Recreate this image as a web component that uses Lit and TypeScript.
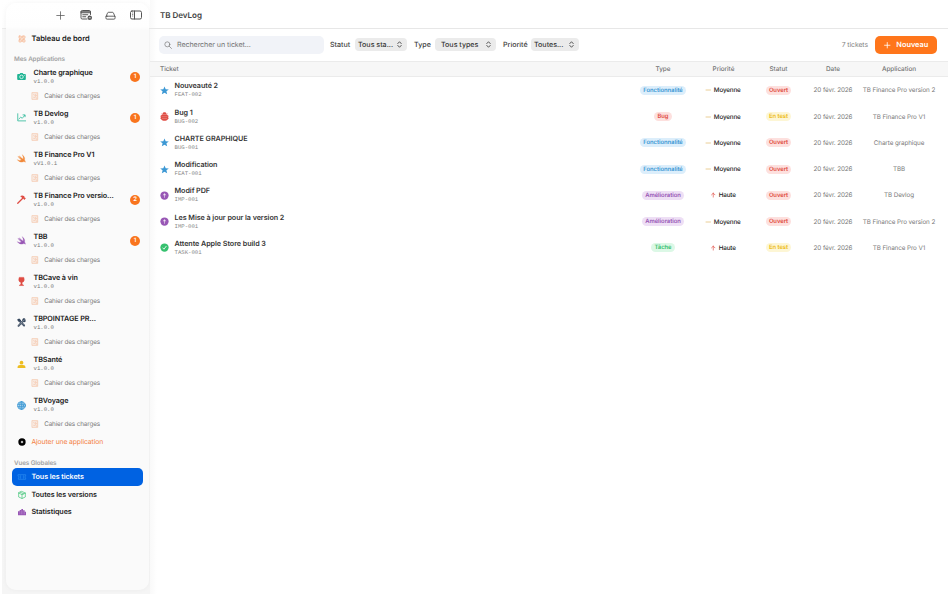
import { LitElement, html, css, svg } from "lit";
import { customElement, property } from "lit/decorators.js";
import { classMap } from "lit/directives/class-map.js";

const icons: Record<string, unknown> = {
  plus: svg`<path d="M12 2v20M2 12h20" class="s"/>`,
  calendar: svg`<path d="M14 20H4.500a2.500 2.500 0 0 1-2.500-2.500v-12A2.500 2.500 0 0 1 4.500 3h14A2.500 2.500 0 0 1 21 5.500V11M2 7.500h19M2 5.500h19M5.500 11.500h10M5.500 15.500h6" class="s"/><circle cx="19.500" cy="17.500" r="4.500"/><path d="M17.500 17.500h4" stroke="#fff" stroke-width="1.500"/>`,
  drive: svg`<path d="M2 14.500 5.500 6.800A2.500 2.500 0 0 1 7.800 5h8.400a2.500 2.500 0 0 1 2.300 1.800L22 14.500" class="s"/><rect x="2" y="13.500" width="20" height="6.500" rx="2.500" class="s"/>`,
  panel: svg`<rect x="1" y="4" width="22" height="16" rx="3" class="s"/><path d="M9 4v16" class="s"/><path d="M4 8h2.500M4 11h2.500M4 14h2.500" stroke="currentColor" stroke-width="1.300"/>`,
  grid: svg`<path d="M3 3h18v18H3z" fill-opacity=".25"/><g class="s"><rect x="3" y="3" width="7" height="7" rx="1"/><rect x="14" y="3" width="7" height="7" rx="1"/><rect x="3" y="14" width="7" height="7" rx="1"/><rect x="14" y="14" width="7" height="7" rx="1"/></g>`,
  camera: svg`<path d="M3 5h4l2-2.500h6L17 5h4a2.500 2.500 0 0 1 2.500 2.500v11A2.500 2.500 0 0 1 21 21H3a2.500 2.500 0 0 1-2.500-2.500v-11A2.500 2.500 0 0 1 3 5z"/><circle cx="12" cy="13" r="4.700" fill="none" stroke="#fff" stroke-width="2"/><circle cx="20" cy="8.500" r="1.200" fill="#fff"/>`,
  chart: svg`<path d="M2 2v19h21M5 16l5-5 4 3 7-8M16 5h5.500v5" class="s"/>`,
  swift: svg`<path d="M14 2c5 4 7.500 9 6 14 2 2.500 2.500 4.500 2 6-1.500-2-3.500-2.300-5.500-1.300C11 23 4.500 20.500 1 15c4 2.500 8 3 11 1.300C8 13 5 9.500 2.500 6c3 2.500 6 5 9 7C9.500 10.500 7.500 8 6 5c3.500 3.500 7 6.500 10.500 8.800C17.500 10 16.500 6 14 2z" stroke="currentColor"/>`,
  hammer: svg`<path d="M2 22 16 8" fill="none" stroke="currentColor" stroke-width="3.400" stroke-linecap="round"/><path d="M8 3.500c4-3 8.500-2.500 11 0l1.500 1.500-.2 2 1 .8 1-.3 1.200 1.200-4 4.300-1.400-1.200v-1.200L17 9.500l-2 .2-2-2C12.500 6 11 4.500 8 3.500z"/>`,
  wine: svg`<path d="M6 1h12c1.200 4 1.500 7 .5 9.500-.8 2-2.500 3.200-5 3.600V20c2 .3 4 1 4 2.800h-11C6.500 21 8.500 20.300 10.500 20v-5.900c-2.500-.4-4.200-1.600-5-3.600C4.500 8 4.800 5 6 1z" stroke="currentColor" stroke-width="1.500"/>`,
  tools: svg`<path d="M4 21 20 4M6 7l13 13" fill="none" stroke="currentColor" stroke-width="5" stroke-linecap="round"/><path d="M1 3l5-2 5 5-1 4-4 1-5-5zM14 4c2-4 6-4 7-2l-3 3 1 2 5-1c0 4-4 6-6 5z"/><path d="M4 21 20 4M8 9l11 11" stroke="#fff" stroke-opacity=".8" stroke-width="1.100"/>`,
  person: svg`<circle cx="12" cy="7" r="5"/><path d="M1.500 21v-2.500C2 14 7 13.500 12 13.500s10 .5 10.500 5V21z"/>`,
  globe: svg`<circle cx="12" cy="12" r="11" fill-opacity=".4"/><g class="s"><circle cx="12" cy="12" r="10.500"/><ellipse cx="12" cy="12" rx="5" ry="10.500"/><path d="M2 9h20M2 15h20M12 1.500v21"/></g>`,
  doc: svg`<path d="M4 2h16v20H4z" fill-opacity=".2"/><path d="M4 2h16v20H4zM8 8l2 2 4-4M8 16h3M14 13l2 6M13 10h4" class="s"/>`,
  addcircle: svg`<circle cx="12" cy="12" r="11"/><path d="M12 8.500v7M8.500 12h7" stroke="#fff" stroke-width="2.800"/>`,
  ticket: svg`<path d="M1 5h22v4.500a2.500 2.500 0 0 0 0 5V19H1v-4.500a2.500 2.500 0 0 0 0-5z" fill-opacity=".1"/><path d="M1 5h22v4.500a2.500 2.500 0 0 0 0 5V19H1v-4.500a2.500 2.500 0 0 0 0-5zM7 8v8M17 8v8" class="s"/>`,
  box: svg`<path d="M12 1.500 22 6v12l-10 4.500L2 18V6zM2 6l10 5 10-5M12 11v11M7 3.700l10 5" class="s"/>`,
  bars: svg`<path d="M0 10h5V6h5V3h5v4h5v4h4v11H0z"/><path d="M5.500 10v9M10.500 7v12M15 8v11M19.500 11v8" stroke="#fff" stroke-opacity=".5" stroke-width="1"/>`,
  star: svg`<path d="m12 1 3.100 7.500 8.400.6-6.400 5.200 2 8L12 18l-7.100 4.300 2-8L.5 9.100l8.400-.6z"/>`,
  bug: svg`<path d="M6.500 6c0-7 11-7 11 0v1h-11z"/><path d="M4 8h16c2.500 4 2.500 8 1 11-2 3.500-5.500 4.500-9 4.500S5 22.500 3 19C1.500 16 1.500 12 4 8z"/><path d="M1 11h22M1 17h22M4 5l3 2M20 5l-3 2" stroke="currentColor" stroke-width="2"/><path d="M4 12.500h16M5 17.500h14" stroke="#fff" stroke-opacity=".4" stroke-width="1.600"/>`,
  up: svg`<circle cx="12" cy="12" r="11"/><path d="M12 18V8" stroke="#fff" stroke-opacity=".6" stroke-width="2.400"/><path d="m7 11.500 5-6 5 6z" fill="#fff" fill-opacity=".65"/>`,
  check: svg`<circle cx="12" cy="12" r="11"/><path d="m7 12.500 3.500 4L17 8" fill="none" stroke="#fff" stroke-width="2.200"/>`,
  search: svg`<circle cx="10" cy="10" r="7.500" class="s"/><path d="m15.500 15.500 7 7" class="s"/>`,
  updown: svg`<path d="m6 9 6-6.500L18 9M6 15l6 6.500 6-6.500" class="s"/>`,
  dash: svg`<path d="M0 12h24" class="s"/>`,
  arrow: svg`<path d="M12 23V2M3 11l9-9 9 9" class="s"/>`,
};

@customElement("ui-icon")
class UiIcon extends LitElement {
  @property() name = "plus";
  static styles = css`
    :host { display: inline-flex; flex: none; width: 9px; height: 9px; }
    svg { width: 100%; height: 100%; fill: currentColor; overflow: visible; }
    .s { fill: none; stroke: currentColor; stroke-width: var(--w, 2); stroke-linecap: round; stroke-linejoin: round; }
  `;
  render() {
    return html`<svg viewBox="0 0 24 24" aria-hidden="true">${icons[this.name]}</svg>`;
  }
}

const apps = [
  { name: "Charte graphique", version: "v1.0.0", icon: "camera", tone: "teal", count: 1 },
  { name: "TB Devlog", version: "v1.0.0", icon: "chart", tone: "teal", count: 1 },
  { name: "TB Finance Pro V1", version: "vV1.0.1", icon: "swift", tone: "orange", count: 0 },
  { name: "TB Finance Pro versio...", version: "v1.0.0", icon: "hammer", tone: "red", count: 2 },
  { name: "TBB", version: "v1.0.0", icon: "swift", tone: "purple", count: 1 },
  { name: "TBCave à vin", version: "v1.0.0", icon: "wine", tone: "red", count: 0 },
  { name: "TBPOINTAGE PR...", version: "v1.0.0", icon: "tools", tone: "navy", count: 0 },
  { name: "TBSanté", version: "v1.0.0", icon: "person", tone: "yellow", count: 0 },
  { name: "TBVoyage", version: "v1.0.0", icon: "globe", tone: "blue", count: 0 },
];

const kinds: Record<string, { label: string; icon: string; tone: string }> = {
  feature: { label: "Fonctionnalité", icon: "star", tone: "blue" },
  bug: { label: "Bug", icon: "bug", tone: "red" },
  improvement: { label: "Amélioration", icon: "up", tone: "purple" },
  task: { label: "Tâche", icon: "check", tone: "green" },
};

const tickets = [
  { title: "Nouveauté 2", id: "FEAT-002", kind: "feature", high: false, open: true, app: "TB Finance Pro version 2" },
  { title: "Bug 1", id: "BUG-002", kind: "bug", high: false, open: false, app: "TB Finance Pro V1" },
  { title: "CHARTE GRAPHIQUE", id: "BUG-001", kind: "feature", high: false, open: true, app: "Charte graphique" },
  { title: "Modification", id: "FEAT-001", kind: "feature", high: false, open: true, app: "TBB" },
  { title: "Modif PDF", id: "IMP-001", kind: "improvement", high: true, open: true, app: "TB Devlog" },
  { title: "Les Mise à jour pour la version 2", id: "IMP-001", kind: "improvement", high: false, open: true, app: "TB Finance Pro version 2" },
  { title: "Attente Apple Store build 3", id: "TASK-001", kind: "task", high: true, open: false, app: "TB Finance Pro V1" },
];

@customElement("app-root")
class AppRoot extends LitElement {
  static styles = css`
    :host { display: grid; grid-template-columns: 150px 798px; height: 594px; overflow: hidden; background: #fff; font-family: Inter, "Liberation Sans", sans-serif; font-size: 7px; line-height: 10px; color: #252525; white-space: nowrap; text-rendering: geometricPrecision; }
    * { box-sizing: border-box; }
    .side { display: flex; padding: 3px 1px 4px 6px; background: linear-gradient(90deg, #fff 2px, transparent 2px), linear-gradient(#fff 0, #fdfdfd 28px, #ececec 28px, #ececec 29px, #f8f8f8 29px, #f5f5f5); }
    .card { width: 143px; border-radius: 10px; background: linear-gradient(#fff 0, #fefefe 24px, #fafafa 27px); box-shadow: 0 0 5px #0000000b; overflow: hidden; }
    .tools { height: 24px; display: flex; align-items: center; color: #555; padding-left: 50px; }
    .tools ui-icon { width: 11px; height: 11px; --w: 2; }
    .tools ui-icon:nth-child(1) { width: 9px; height: 9px; }
    .tools ui-icon:nth-child(2) { margin-left: 15px; width: 12px; height: 12px; }
    .tools ui-icon:nth-child(3) { margin-left: 12.500px; }
    .tools ui-icon:nth-child(4) { margin-left: 14px; width: 12px; height: 12px; }
    .nav { height: 17.600px; margin: 0 6px; padding-left: 6px; display: flex; align-items: center; gap: 5.500px; border-radius: 5px; font-size: 7.150px; letter-spacing: -.07px; font-weight: 600; color: #1c1c1c; }
    .nav ui-icon { width: 8px; height: 8px; }
    .nav.home { margin-top: 2px; height: 18px; padding-top: 1px; font-size: 7.500px; letter-spacing: -.02px; }
    .nav.home ui-icon { color: #f8b48c; }
    .nav.on { background: #0062e2; color: #fff; }
    .nav.on ui-icon { color: #2b8df0; }
    .add { height: 17px; margin-top: .5px; padding-left: 12px; display: flex; align-items: center; gap: 5.500px; color: #f48042; font-size: 6.800px; letter-spacing: -.11px; }
    .add ui-icon { width: 8px; height: 8px; color: #000; }
    .section { padding-left: 8px; color: #a2a2a2; font-size: 6.300px; letter-spacing: -.11px; font-weight: 600; }
    .section.mine { margin-top: 6.500px; }
    .section.views { margin-top: 7.700px; }
    .app { height: 41.080px; padding: 4px 9px 0 11px; display: grid; grid-template-columns: 10px 1fr 10px; column-gap: 6.500px; grid-template-rows: 18px 1fr; align-items: center; }
    .app > ui-icon { width: 9px; height: 9px; justify-self: start; }
    .name { font-size: 7.200px; line-height: 9px; letter-spacing: -.09px; font-weight: 600; color: #202020; }
    .mono { font: 5.650px/9px "Liberation Mono", monospace; color: #777; }
    .count { width: 10px; height: 10px; border-radius: 50%; background: #f9741d; color: #fff; font-size: 6px; font-weight: 600; text-align: center; }
    .spec { grid-column: 1 / -1; align-self: start; display: flex; align-items: center; gap: 5.200px; padding: 5px 0 0 14px; color: #7c7c7c; font-size: 6.350px; letter-spacing: -.14px; }
    .spec ui-icon { width: 8px; height: 8px; color: #f5bfa0; }
    .main { display: flex; flex-direction: column; background: linear-gradient(90deg, #f9f9f9, #fff 7px); }
    .title { height: 29px; border-bottom: 1px solid #e7e7e7; padding: 2px 0 0 10px; display: flex; align-items: center; font-size: 8.050px; letter-spacing: -.04px; font-weight: 600; color: #444; }
    .bar { height: 31.500px; display: flex; align-items: center; padding: 0 11px 0 9px; font-size: 7.100px; color: #3c3c3c; font-weight: 500; }
    .search { width: 165px; height: 18px; border-radius: 5px; background: #f1f3f8; display: flex; align-items: center; gap: 5px; padding-left: 5px; color: #747474; font-weight: 400; margin-right: 6px; letter-spacing: -.07px; }
    .search ui-icon { width: 8px; height: 8px; }
    .sel { height: 13px; border-radius: 4px; background: #ebebeb; display: flex; align-items: center; justify-content: space-between; padding: 0 4px 0 3px; color: #333; }
    .sel ui-icon { width: 7px; height: 7px; --w: 2.700; }
    .l1 { width: 25px; } .l2 { width: 21px; } .l3 { width: 28px; }
    .w1 { width: 52px; margin-right: 7px; } .w2 { width: 61px; padding-left: 6px; margin-right: 7px; } .w3 { width: 48px; }
    .total { margin-left: auto; font-size: 6.800px; letter-spacing: -.06px; color: #7e7e7e; font-weight: 400; }
    .new { width: 62px; height: 18px; margin-left: 7px; border-radius: 5px; background: #ff761b; color: #fff; display: flex; align-items: center; justify-content: center; gap: 6px; font-size: 7.400px; letter-spacing: -.03px; font-weight: 600; }
    .new ui-icon { width: 6.500px; height: 6.500px; --w: 3; }
    .row { display: grid; grid-template-columns: 1fr 60px 61px 49px 60px 72px; padding: 0 13px 0 10px; height: 26.250px; align-items: center; justify-items: center; font-size: 6.300px; letter-spacing: -.09px; color: #7a7a7a; }
    .row.head { height: 16.700px; background: #f7f7f7; border: solid #ebebeb; border-width: 1px 0; font-size: 6.400px; letter-spacing: -.04px; font-weight: 500; color: #727272; }
    .row > :first-child { justify-self: start; }
    .ticket { display: flex; align-items: center; gap: 5.500px; letter-spacing: 0; }
    .ticket .name { color: #353535; letter-spacing: -.06px; }
    .ticket .mono { color: #888; }
    .prio { display: flex; align-items: center; gap: 3px; color: #222; font-weight: 500; font-size: 6.300px; letter-spacing: -.16px; }
    .prio ui-icon { width: 4.500px; height: 6px; --w: 3.600; }
    .pill { height: 9px; line-height: 9px; border-radius: 5px; padding: 0 3px; font-size: 5.900px; letter-spacing: -.05px; font-weight: 600; }
    .teal { color: #1fb493; } .orange { color: #f18838; } .red { color: #df4c43; } .purple { color: #9857b5; }
    .navy { color: #36475d; } .yellow { color: #edbd22; } .blue { color: #3c98d4; } .green { color: #36c16f; }
    .pill.blue { background: #dceefb; } .pill.red { background: #fde0de; } .pill.purple { background: #eedff5; }
    .pill.green { background: #dcf8e6; } .pill.yellow { background: #fdf6d5; }
    ui-icon.gold { color: #dfb764; }
  `;
  render() {
    return html`
      <aside class="side"><div class="card">
        <div class="tools">${["plus", "calendar", "drive", "panel"].map((n) => html`<ui-icon name=${n}></ui-icon>`)}</div>
        <div class="nav home"><ui-icon name="grid"></ui-icon>Tableau de bord</div>
        <div class="section mine">Mes Applications</div>
        ${apps.map((a) => html`<div class="app">
          <ui-icon class=${a.tone} name=${a.icon}></ui-icon>
          <div><div class="name">${a.name}</div><div class="mono">${a.version}</div></div>
          ${a.count ? html`<span class="count">${a.count}</span>` : html`<span></span>`}
          <div class="spec"><ui-icon name="doc"></ui-icon>Cahier des charges</div>
        </div>`)}
        <div class="add"><ui-icon name="addcircle"></ui-icon>Ajouter une application</div>
        <div class="section views">Vues Globales</div>
        <div class="nav on"><ui-icon name="ticket"></ui-icon>Tous les tickets</div>
        <div class="nav"><ui-icon class="green" name="box"></ui-icon>Toutes les versions</div>
        <div class="nav"><ui-icon class="purple" name="bars"></ui-icon>Statistiques</div>
      </div></aside>
      <main class="main">
        <div class="title">TB DevLog</div>
        <div class="bar">
          <div class="search"><ui-icon name="search"></ui-icon>Rechercher un ticket...</div>
          <span class="l1">Statut</span><span class="sel w1">Tous sta...<ui-icon name="updown"></ui-icon></span>
          <span class="l2">Type</span><span class="sel w2">Tous types<ui-icon name="updown"></ui-icon></span>
          <span class="l3">Priorité</span><span class="sel w3">Toutes...<ui-icon name="updown"></ui-icon></span>
          <span class="total">7 tickets</span>
          <span class="new"><ui-icon name="plus"></ui-icon>Nouveau</span>
        </div>
        <div class="row head">${["Ticket", "Type", "Priorité", "Statut", "Date", "Application"].map((h) => html`<span>${h}</span>`)}</div>
        ${tickets.map((t) => {
          const k = kinds[t.kind];
          return html`<div class="row">
            <div class="ticket"><ui-icon class=${k.tone} name=${k.icon}></ui-icon><div><div class="name">${t.title}</div><div class="mono">${t.id}</div></div></div>
            <span class="pill ${k.tone}">${k.label}</span>
            <span class="prio"><ui-icon class=${classMap({ red: t.high, gold: !t.high })} name=${t.high ? "arrow" : "dash"}></ui-icon>${t.high ? "Haute" : "Moyenne"}</span>
            <span class=${classMap({ pill: true, red: t.open, yellow: !t.open })}>${t.open ? "Ouvert" : "En test"}</span>
            <span>20 févr. 2026</span><span>${t.app}</span>
          </div>`;
        })}
      </main>`;
  }
}
